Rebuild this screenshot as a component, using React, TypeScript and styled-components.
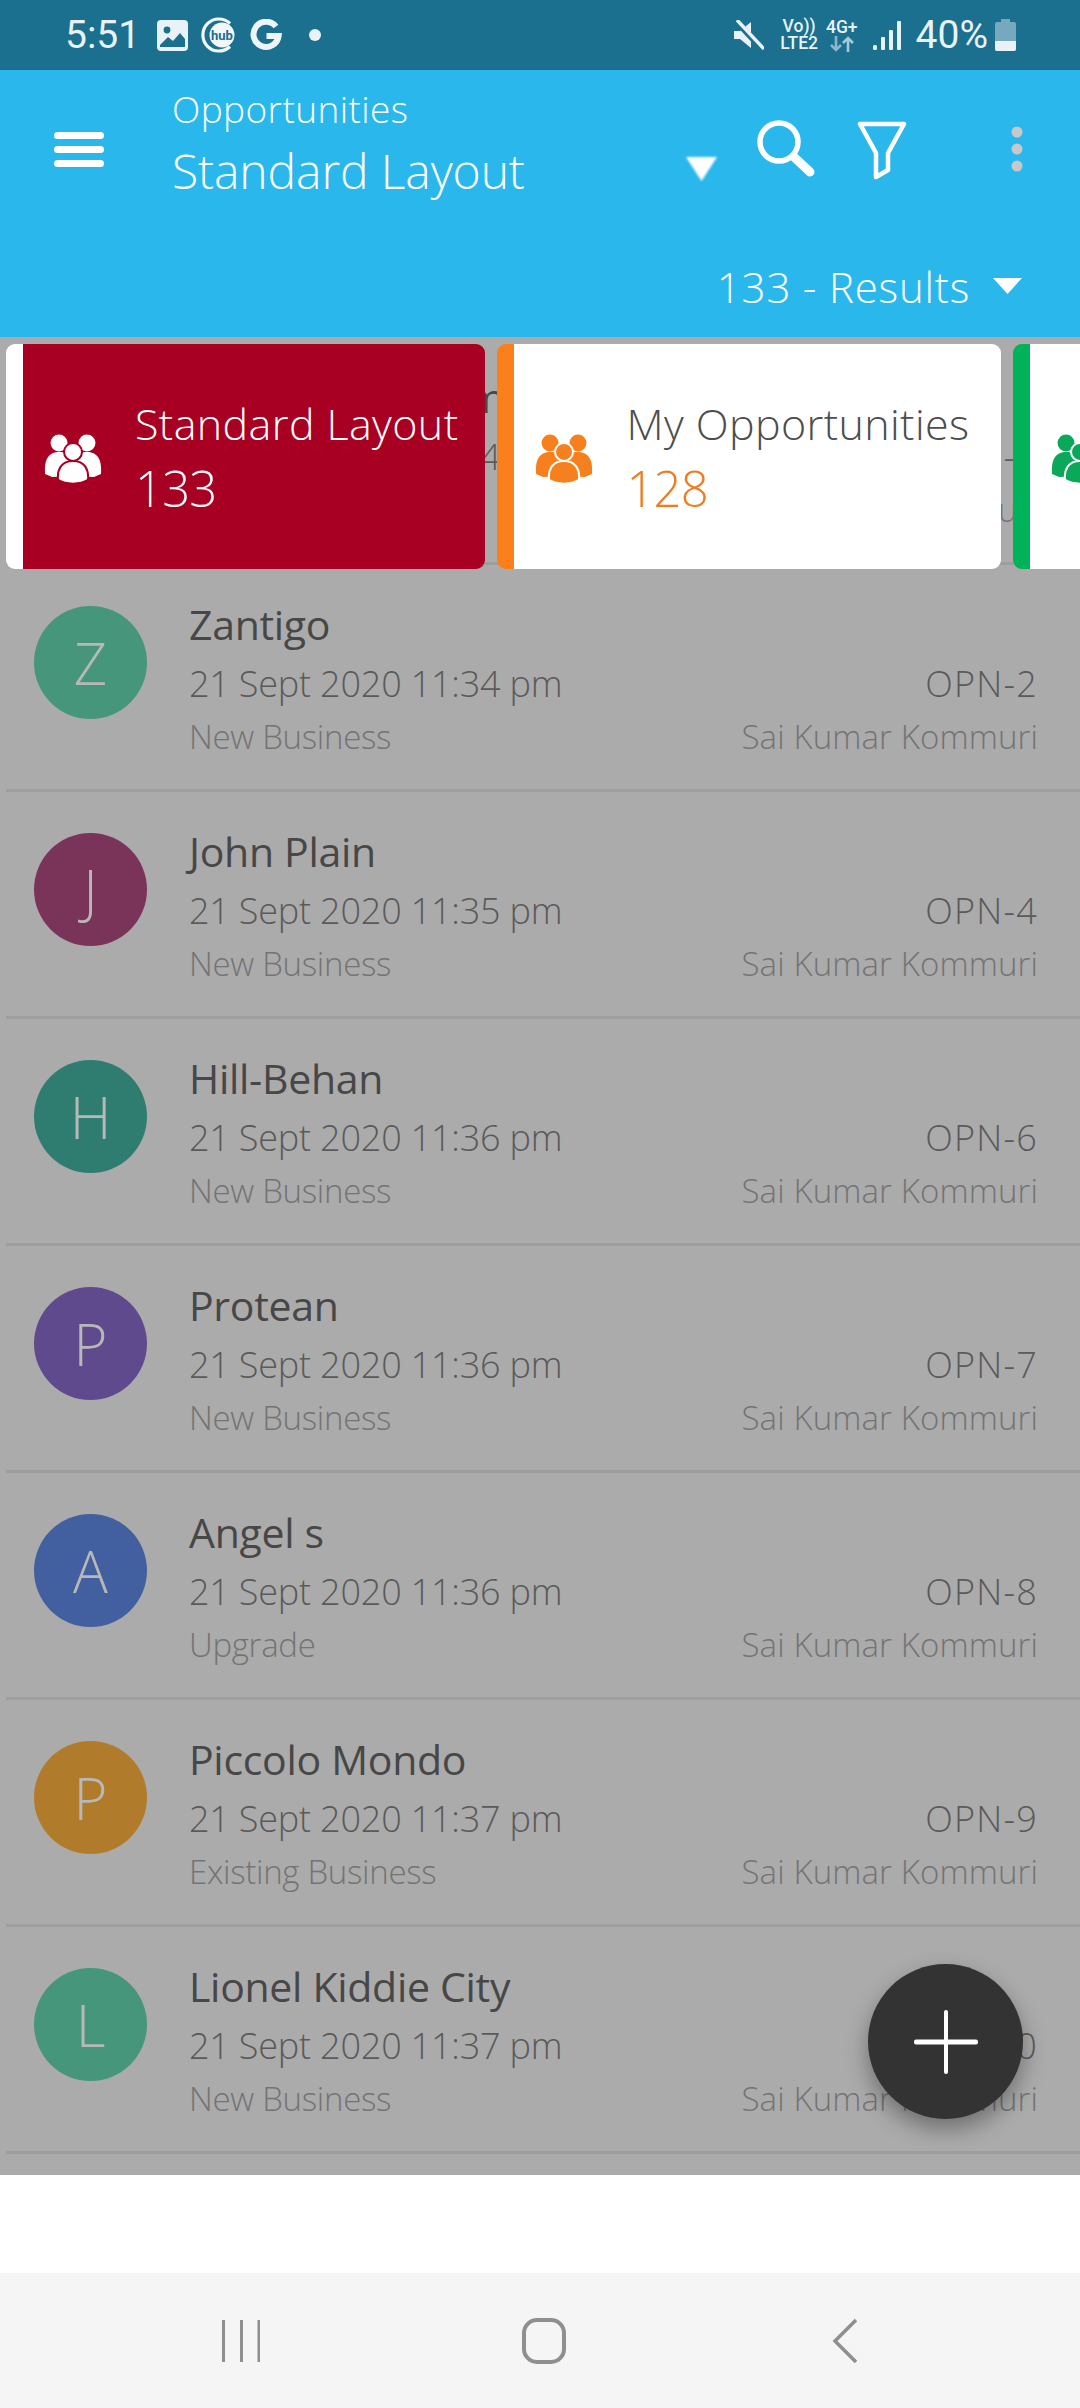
import React from "react";
import styled, { createGlobalStyle } from "styled-components";

const Global = createGlobalStyle`
  html, body { margin: 0; padding: 0; background: #fff; }
  * { box-sizing: border-box; }
  body { font-family: "Open Sans", "Noto Sans", sans-serif; }
`;

const Page = styled.div`
  width: 1080px;
  height: 2408px;
  display: flex;
  flex-direction: column;
  overflow: hidden;
  position: relative;
  background: #fff;
`;

/* ---------- status bar ---------- */
const StatusBar = styled.div`
  height: 70px;
  flex: none;
  background: #1b6f8f;
  display: flex;
  align-items: center;
  padding: 0 64px 0 65px;
  color: #e9f3f7;
  font-family: Roboto, sans-serif;
`;
const StatusText = styled.span<{ $left?: number; $right?: number }>`
  font-size: 39px;
  line-height: 70px;
  font-weight: 400;
  margin-left: ${(p) => p.$left ?? 0}px;
  margin-right: ${(p) => p.$right ?? 0}px;
`;
const StatusGroup = styled.div<{ $gap?: number; $left?: number }>`
  display: flex;
  align-items: center;
  gap: ${(p) => p.$gap ?? 12}px;
  margin-left: ${(p) => p.$left ?? 0}px;
`;
const NotifyDot = styled.svg`
  margin-left: 15px;
`;
const SignalIcon = styled.svg`
  margin-left: 6px;
`;
const Spacer = styled.div`
  flex: 1;
`;
const StackLabel = styled.div<{ $left?: number }>`
  display: flex;
  flex-direction: column;
  align-items: center;
  margin-left: ${(p) => p.$left ?? 0}px;
  font-size: 17.5px;
  line-height: 17px;
  font-weight: 500;
  color: #e9f3f7;
`;

/* ---------- header ---------- */
const Header = styled.header`
  height: 267px;
  flex: none;
  background: #2ab8ec;
  color: #fff;
  display: flex;
  flex-direction: column;
`;
const TopRow = styled.div`
  display: flex;
  align-items: flex-start;
  height: 189px;
`;
const Burger = styled.div`
  width: 50px;
  margin: 62px 0 0 54px;
  display: flex;
  flex-direction: column;
  gap: 7px;
  flex: none;
`;
const BurgerBar = styled.span`
  height: 7px;
  border-radius: 4px;
  background: #fff;
`;
const Titles = styled.div`
  margin: 16px 0 0 68px;
  width: 514px;
  flex: none;
  font-weight: 300;
`;
const Eyebrow = styled.div`
  font-size: 37px;
  line-height: 46px;
  letter-spacing: 0.4px;
`;
const Title = styled.div`
  font-size: 48px;
  line-height: 70px;
  letter-spacing: -0.1px;
  margin-top: 4px;
`;
const SmallCaret = styled.svg`
  flex: none;
  margin-top: 87px;
  filter: blur(0.8px);
`;
const IconSlot = styled.svg<{ $left: number; $top: number }>`
  flex: none;
  margin-left: ${(p) => p.$left}px;
  margin-top: ${(p) => p.$top}px;
`;
const ResultsRow = styled.div`
  display: flex;
  align-items: center;
  justify-content: flex-end;
  padding-right: 58px;
  height: 56px;
`;
const Results = styled.span`
  font-size: 42px;
  line-height: 56px;
  font-weight: 300;
  letter-spacing: 0.8px;
  white-space: pre;
`;
const ResultsCaret = styled.svg`
  margin: -2px 0 0 23px;
  flex: none;
`;

/* ---------- list ---------- */
const ListArea = styled.main`
  position: relative;
  height: 1838px;
  flex: none;
  padding-top: 1px;
  background: #ababab;
  overflow: hidden;
`;
const Row = styled.div`
  height: 227px;
  margin-left: 6px;
  border-bottom: 3px solid #9e9e9e;
  display: flex;
  align-items: flex-start;
  padding: 41px 42px 0 28px;
`;
const Avatar = styled.div<{ $bg: string }>`
  width: 113px;
  height: 113px;
  flex: none;
  border-radius: 50%;
  background: ${(p) => p.$bg};
  color: #b6b9b7;
  display: flex;
  align-items: center;
  justify-content: center;
  font-size: 58px;
  font-weight: 300;
`;
const RowBody = styled.div`
  flex: 1;
  margin-left: 42px;
  margin-top: -15px;
  min-width: 0;
`;
const Name = styled.div`
  font-size: 41px;
  line-height: 66px;
  font-weight: 500;
  letter-spacing: -0.3px;
  color: #474747;
  white-space: nowrap;
`;
const MetaLine = styled.div<{ $sub?: boolean }>`
  display: flex;
  justify-content: space-between;
  white-space: nowrap;
  height: ${(p) => (p.$sub ? 52 : 54)}px;
  line-height: ${(p) => (p.$sub ? 52 : 54)}px;
  font-size: ${(p) => (p.$sub ? 33 : 36)}px;
  font-weight: 300;
  letter-spacing: ${(p) => (p.$sub ? -0.3 : -0.2)}px;
  color: ${(p) => (p.$sub ? "#747474" : "#5a5a5a")};
`;
const Code = styled.span`
  letter-spacing: 1.2px;
`;
const Owner = styled.span`
  letter-spacing: 0.1px;
`;

/* ---------- cards ---------- */
const CardStrip = styled.div`
  position: absolute;
  top: 7px;
  left: 6px;
  display: flex;
  gap: 12px;
  width: 1200px;
`;
const Card = styled.div<{ $stripe: string; $bg: string; $pad?: number }>`
  height: 225px;
  flex: none;
  border-radius: 9px;
  border-left: 17px solid ${(p) => p.$stripe};
  background: ${(p) => p.$bg};
  display: flex;
  align-items: center;
  padding: 0 ${(p) => p.$pad ?? 27}px 0 21px;
`;
const CardIcon = styled.svg`
  flex: none;
  margin-right: 33px;
  margin-top: 4px;
`;
const CardText = styled.div`
  font-weight: 300;
`;
const CardLabel = styled.div<{ $color: string }>`
  font-size: 43px;
  line-height: 62px;
  letter-spacing: 0.4px;
  color: ${(p) => p.$color};
  white-space: nowrap;
`;
const CardCount = styled.div<{ $color: string }>`
  font-size: 49px;
  line-height: 66px;
  letter-spacing: -0.8px;
  color: ${(p) => p.$color};
`;

/* ---------- FAB ---------- */
const Fab = styled.div`
  position: absolute;
  left: 868px;
  top: 1964px;
  width: 155px;
  height: 155px;
  border-radius: 50%;
  background: #333;
  box-shadow: 0 10px 22px rgba(0, 0, 0, 0.35);
  display: flex;
  align-items: center;
  justify-content: center;
`;

/* ---------- footer ---------- */
const WhiteGap = styled.div`
  height: 98px;
  flex: none;
  background: #fff;
`;
const NavBar = styled.nav`
  height: 135px;
  flex: none;
  background: #f5f5f5;
  display: grid;
  grid-template-columns: 222px 38px 262px 44px 266px 28px;
  align-items: center;
`;
const NavIcon = styled.svg<{ $col: number }>`
  grid-column: ${(p) => p.$col};
  display: block;
`;

/* ---------- drawings ---------- */
function People({ fill, outline, size = 58 }: { fill: string; outline: string; size?: number }) {
  return (
    <CardIcon width={size} height={size * 0.86} viewBox="0 0 58 50">
      <g fill={fill}>
        <circle cx="15" cy="9" r="8.5" />
        <circle cx="43" cy="9" r="8.5" />
        <path d="M1 40c-1-12 2-22 14-22s14 8 14 14v10L8 43z" />
        <path d="M57 40c1-12-2-22-14-22s-14 8-14 14v10l21 1z" />
      </g>
      <g fill={fill} stroke={outline} strokeWidth="2">
        <circle cx="29" cy="18" r="9" />
        <path d="M14 46c-1-10 3-19 15-19s16 9 15 19c-8 5-22 5-30 0z" />
      </g>
    </CardIcon>
  );
}

const MuteIcon = () => (
  <svg width="30" height="30" viewBox="0 0 30 30">
    <path fill="#e9f3f7" d="M0 11h6l11-9v26L6 19H0z" />
    <path stroke="#1b6f8f" strokeWidth="6" d="M1 0l28 30" />
    <path stroke="#e9f3f7" strokeWidth="3.4" d="M3 0l27 29" />
  </svg>
);

const rows = [
  { n: "Sunrise Toy Company", d: "21 Sept 2020 11:34 pm", t: "New Business", o: "OPN-1", c: "#45967b" },
  { n: "Zantigo", d: "21 Sept 2020 11:34 pm", t: "New Business", o: "OPN-2", c: "#45967b" },
  { n: "John Plain", d: "21 Sept 2020 11:35 pm", t: "New Business", o: "OPN-4", c: "#7a3459" },
  { n: "Hill-Behan", d: "21 Sept 2020 11:36 pm", t: "New Business", o: "OPN-6", c: "#2f7d70" },
  { n: "Protean", d: "21 Sept 2020 11:36 pm", t: "New Business", o: "OPN-7", c: "#5e4a8c" },
  { n: "Angel s", d: "21 Sept 2020 11:36 pm", t: "Upgrade", o: "OPN-8", c: "#42609f" },
  { n: "Piccolo Mondo", d: "21 Sept 2020 11:37 pm", t: "Existing Business", o: "OPN-9", c: "#b07c2c" },
  { n: "Lionel Kiddie City", d: "21 Sept 2020 11:37 pm", t: "New Business", o: "OPN-10", c: "#45967b" },
];

export default function App() {
  return (
    <Page>
      <Global />
      <StatusBar>
        <StatusText>5:51</StatusText>
        <StatusGroup $gap={12} $left={17}>
          <svg width="31" height="31" viewBox="0 0 31 31">
            <rect width="31" height="31" rx="4" fill="#e9f3f7" />
            <circle cx="10" cy="10" r="3.4" fill="#1b6f8f" />
            <path d="M3 25l8-8 5 4 7-8 5 6v8H3z" fill="#1b6f8f" />
          </svg>
          <svg width="38" height="38" viewBox="0 0 38 38">
            <path d="M30 7.5A16 16 0 1 0 30 30.5" fill="none" stroke="#f2f7fa" strokeWidth="3.2" />
            <circle cx="22" cy="19" r="12.5" fill="#f2f7fa" />
            <text x="22" y="23.5" textAnchor="middle" fontSize="13" fontWeight="700" fontFamily="Roboto, sans-serif" fill="#1b6f8f">hub</text>
          </svg>
          <svg width="32" height="32" viewBox="0 0 32 32">
            <path d="M26 7.5A12.6 12.6 0 1 0 28.6 17H16.5" fill="none" stroke="#eef5f8" strokeWidth="6" />
          </svg>
          <NotifyDot width="12" height="12" viewBox="0 0 12 12">
            <circle cx="6" cy="6" r="6" fill="#e9f3f7" />
          </NotifyDot>
        </StatusGroup>
        <Spacer />
        <StatusGroup $gap={9}>
          <MuteIcon />
          <StackLabel $left={7}>
            <span>Vo))</span>
            <span>LTE2</span>
          </StackLabel>
          <StackLabel $left={-1}>
            <span>4G+</span>
            <svg width="26" height="16" viewBox="0 0 26 16">
              <path d="M7 0v14M2 9l5 5 5-5" fill="none" stroke="#8ab7c9" strokeWidth="2.6" />
              <path d="M19 16V2M14 7l5-5 5 5" fill="none" stroke="#a7cad8" strokeWidth="2.6" />
            </svg>
          </StackLabel>
          <SignalIcon width="29" height="29" viewBox="0 0 29 29">
            <rect x="0" y="24" width="4" height="5" rx="1.5" fill="#e9f3f7" />
            <rect x="8" y="16" width="4" height="13" rx="1" fill="#e9f3f7" />
            <rect x="16" y="9" width="4" height="20" rx="1" fill="#e9f3f7" />
            <rect x="24" y="0" width="4" height="29" rx="1" fill="#e9f3f7" />
          </SignalIcon>
          <StatusText $left={5} $right={-2}>40%</StatusText>
          <svg width="21" height="32" viewBox="0 0 21 32">
            <path d="M6 0h9v3h4a2 2 0 0 1 2 2v25a2 2 0 0 1-2 2H2a2 2 0 0 1-2-2V5a2 2 0 0 1 2-2h4z" fill="#76a9bd" />
            <path d="M0 22h21v8a2 2 0 0 1-2 2H2a2 2 0 0 1-2-2z" fill="#e9f3f7" />
          </svg>
        </StatusGroup>
      </StatusBar>

      <Header>
        <TopRow>
          <Burger>
            <BurgerBar />
            <BurgerBar />
            <BurgerBar />
          </Burger>
          <Titles>
            <Eyebrow>Opportunities</Eyebrow>
            <Title>Standard Layout</Title>
          </Titles>
          <SmallCaret width="31" height="24" viewBox="0 0 31 24">
            <path d="M0 0h31L15.5 24z" fill="#fff" />
          </SmallCaret>
          <IconSlot $left={40} $top={50} width="58" height="58" viewBox="0 0 58 58">
            <circle cx="22" cy="22" r="19" fill="none" stroke="#fff" strokeWidth="5.5" />
            <path d="M37 37l16 15" stroke="#fff" strokeWidth="9" strokeLinecap="round" />
          </IconSlot>
          <IconSlot $left={42} $top={50} width="50" height="60" viewBox="0 0 50 60">
            <path d="M3 4h44L31 33v17l-12 7V33z" fill="none" stroke="#fff" strokeWidth="4.5" strokeLinejoin="round" />
          </IconSlot>
          <IconSlot $left={104} $top={56} width="12" height="46" viewBox="0 0 12 46">
            <circle cx="6" cy="6" r="5.5" fill="#c8c8c8" />
            <circle cx="6" cy="23" r="5.5" fill="#c8c8c8" />
            <circle cx="6" cy="40" r="5.5" fill="#c8c8c8" />
          </IconSlot>
        </TopRow>
        <ResultsRow>
          <Results>133 - Results</Results>
          <ResultsCaret width="29" height="16" viewBox="0 0 29 16">
            <path d="M0 0h29L14.5 16z" fill="#fff" />
          </ResultsCaret>
        </ResultsRow>
      </Header>

      <ListArea>
        {rows.map((r) => (
          <Row key={r.o}>
            <Avatar $bg={r.c}>{r.n[0]}</Avatar>
            <RowBody>
              <Name>{r.n}</Name>
              <MetaLine>
                <span>{r.d}</span>
                <Code>{r.o}</Code>
              </MetaLine>
              <MetaLine $sub>
                <span>{r.t}</span>
                <Owner>Sai Kumar Kommuri</Owner>
              </MetaLine>
            </RowBody>
          </Row>
        ))}
        <CardStrip>
          <Card $stripe="#ffffff" $bg="#a70022">
            <People fill="#ffffff" outline="#a70022" />
            <CardText>
              <CardLabel $color="#ffffff">Standard Layout</CardLabel>
              <CardCount $color="#ffffff">133</CardCount>
            </CardText>
          </Card>
          <Card $stripe="#fb7f1b" $bg="#ffffff" $pad={32}>
            <People fill="#f6801e" outline="#ffffff" />
            <CardText>
              <CardLabel $color="#4d4d4d">My Opportunities</CardLabel>
              <CardCount $color="#ee7d22">128</CardCount>
            </CardText>
          </Card>
          <Card $stripe="#00b25a" $bg="#ffffff">
            <People fill="#0aa858" outline="#ffffff" />
            <CardText>
              <CardLabel $color="#4d4d4d">All Opportunities</CardLabel>
              <CardCount $color="#0aa858">133</CardCount>
            </CardText>
          </Card>
        </CardStrip>
      </ListArea>

      <WhiteGap />
      <NavBar>
        <NavIcon $col={2} width="38" height="44" viewBox="0 0 38 44">
          <path d="M1.5 1v42M19.5 1v42M37 1v42" stroke="#8f8f8f" strokeWidth="3" />
        </NavIcon>
        <NavIcon $col={4} width="44" height="46" viewBox="0 0 44 46">
          <rect x="2" y="2" width="40" height="42" rx="13" fill="none" stroke="#8f8f8f" strokeWidth="4" />
        </NavIcon>
        <NavIcon $col={6} width="28" height="46" viewBox="0 0 28 46">
          <path d="M24 2L3 23l21 21" fill="none" stroke="#8f8f8f" strokeWidth="3.5" />
        </NavIcon>
      </NavBar>

      <Fab>
        <svg width="64" height="64" viewBox="0 0 64 64">
          <rect x="0" y="29.5" width="64" height="5" rx="2" fill="#fff" />
          <rect x="30" y="0" width="4" height="64" rx="2" fill="#fff" />
        </svg>
      </Fab>
    </Page>
  );
}
